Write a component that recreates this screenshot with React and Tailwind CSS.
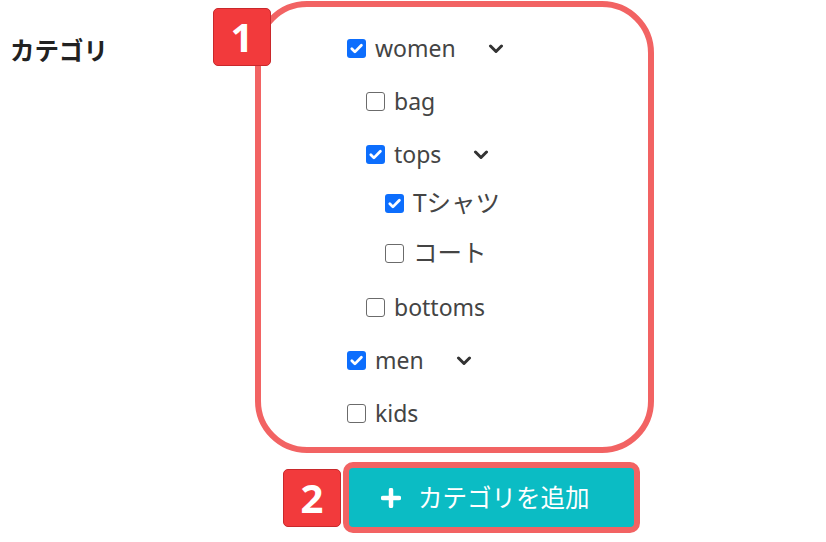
import React from 'react';

const items = [
  { label: 'women', level: 0, checked: true, open: true, h: 'h-[53px]' },
  { label: 'bag', level: 1, checked: false, h: 'h-[53px]' },
  { label: 'tops', level: 1, checked: true, open: true, h: 'h-[53px]' },
  { label: 'Tシャツ', level: 2, checked: true, h: 'h-[45px]', jp: true },
  { label: 'コート', level: 2, checked: false, h: 'h-[55px]', jp: true },
  { label: 'bottoms', level: 1, checked: false, h: 'h-[53px]' },
  { label: 'men', level: 0, checked: true, open: true, h: 'h-[53px]' },
  { label: 'kids', level: 0, checked: false, h: 'h-[53px]' },
];

const indent = ['pl-0', 'pl-[19px]', 'pl-[38px]'];

function Checkbox({ checked }) {
  if (checked) {
    return (
      <span className="flex h-[19px] w-[19px] shrink-0 items-center justify-center rounded-[3px] bg-[#0d6efd]">
        <svg width="15" height="15" viewBox="0 0 16 16" fill="none">
          <path d="M3 8.3l3.3 3.3L13.2 4.6" stroke="white" strokeWidth="3" strokeLinecap="round" strokeLinejoin="round" />
        </svg>
      </span>
    );
  }
  return <span className="h-[19px] w-[19px] shrink-0 rounded-[3px] border-[1.5px] border-[#6b6b6b] bg-white" />;
}

function Chevron() {
  return (
    <svg width="16" height="10" viewBox="0 0 16 10" fill="none" className="ml-[32px]">
      <path d="M2.5 2l5.5 5.5L13.5 2" stroke="#333" strokeWidth="3" strokeLinecap="round" strokeLinejoin="round" />
    </svg>
  );
}

function Badge({ n, className }) {
  return (
    <div className={`absolute flex h-[58px] w-[58px] items-center justify-center rounded-[5px] border border-[#c9282b] bg-[#f23a3c] text-[40px] font-bold leading-none text-white ${className}`}>
      {n}
    </div>
  );
}

export default function App() {
  return (
    <div className="flex h-[542px] w-[826px] bg-white pl-[10px] font-['Noto_Sans','Noto_Sans_CJK_JP',sans-serif] text-[23px] text-[#444]">
      <div className="w-[245px] pt-[32px] font-['Noto_Sans_CJK_JP',sans-serif] text-[24.5px] font-bold text-[#222]">
        カテゴリ
      </div>

      <div className="flex flex-col">
        <div className="relative mt-[1px] h-[452px] w-[399px] rounded-[52px] border-[6px] border-[#f26363] pl-[86px] pt-[15px]">
          <Badge n="1" className="-left-[48px] top-[1px]" />
          <ul>
            {items.map((it) => (
              <li key={it.label} className={`flex items-center ${it.h} ${indent[it.level]}`}>
                <Checkbox checked={it.checked} />
                <span className={`ml-[9px] leading-none ${it.jp ? 'text-[24.5px]' : ''}`}>{it.label}</span>
                {it.open && <Chevron />}
              </li>
            ))}
          </ul>
        </div>

        <div className="relative ml-[88px] mt-[9px]">
          <Badge n="2" className="-left-[60px] top-[7px]" />
          <button className="flex h-[71px] w-[297px] items-center rounded-[10px] border-[6px] border-[#f26363] bg-[#0bbcc4] pl-[32px] font-['Noto_Sans_CJK_JP',sans-serif] text-[24.5px] text-white">
            <svg width="20" height="20" viewBox="0 0 20 20" className="mr-[17px]">
              <path d="M10 2v16M2 10h16" stroke="white" strokeWidth="4.5" strokeLinecap="round" />
            </svg>
            カテゴリを追加
          </button>
        </div>
      </div>
    </div>
  );
}
